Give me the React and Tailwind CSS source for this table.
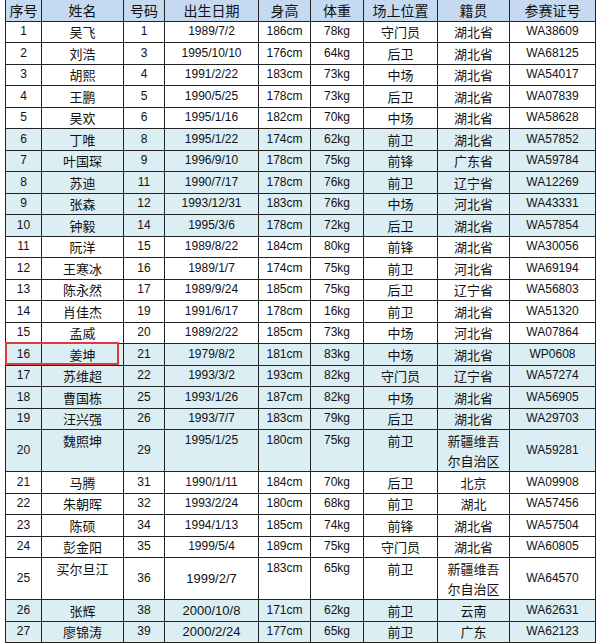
const COLS = [36, 82, 41, 94, 52, 53, 74, 72, 86]
const HEAD = ['序号', '姓名', '号码', '出生日期', '身高', '体重', '场上位置', '籍贯', '参赛证号']

const PLAYERS = [
  ['1', '吴飞', '1', '1989/7/2', '186cm', '78kg', '守门员', '湖北省', 'WA38609'],
  ['2', '刘浩', '3', '1995/10/10', '176cm', '64kg', '后卫', '湖北省', 'WA68125'],
  ['3', '胡熙', '4', '1991/2/22', '183cm', '73kg', '中场', '湖北省', 'WA54017'],
  ['4', '王鹏', '5', '1990/5/25', '178cm', '73kg', '后卫', '湖北省', 'WA07839'],
  ['5', '吴欢', '6', '1995/1/16', '182cm', '70kg', '中场', '湖北省', 'WA58628'],
  ['6', '丁唯', '8', '1995/1/22', '174cm', '62kg', '前卫', '湖北省', 'WA57852'],
  ['7', '叶国琛', '9', '1996/9/10', '178cm', '75kg', '前锋', '广东省', 'WA59784'],
  ['8', '苏迪', '11', '1990/7/17', '178cm', '76kg', '前卫', '辽宁省', 'WA12269'],
  ['9', '张森', '12', '1993/12/31', '183cm', '76kg', '中场', '河北省', 'WA43331'],
  ['10', '钟毅', '14', '1995/3/6', '178cm', '72kg', '后卫', '湖北省', 'WA57854'],
  ['11', '阮洋', '15', '1989/8/22', '184cm', '80kg', '前锋', '湖北省', 'WA30056'],
  ['12', '王寒冰', '16', '1989/1/7', '174cm', '75kg', '前卫', '河北省', 'WA69194'],
  ['13', '陈永然', '17', '1989/9/24', '185cm', '75kg', '后卫', '辽宁省', 'WA56803'],
  ['14', '肖佳杰', '19', '1991/6/17', '178cm', '16kg', '前卫', '湖北省', 'WA51320'],
  ['15', '孟威', '20', '1989/2/22', '185cm', '73kg', '中场', '河北省', 'WA07864'],
  ['16', '姜坤', '21', '1979/8/2', '181cm', '83kg', '中场', '湖北省', 'WP0608'],
  ['17', '苏维超', '22', '1993/3/2', '193cm', '82kg', '守门员', '辽宁省', 'WA57274'],
  ['18', '曹国栋', '25', '1993/1/26', '187cm', '82kg', '中场', '湖北省', 'WA56905'],
  ['19', '汪兴强', '26', '1993/7/7', '183cm', '79kg', '后卫', '湖北省', 'WA29703'],
  ['20', '魏照坤', '29', '1995/1/25', '180cm', '75kg', '前卫', '新疆维吾|尔自治区', 'WA59281'],
  ['21', '马腾', '31', '1990/1/11', '184cm', '70kg', '后卫', '北京', 'WA09908'],
  ['22', '朱朝晖', '32', '1993/2/24', '180cm', '68kg', '前卫', '湖北', 'WA57456'],
  ['23', '陈硕', '34', '1994/1/13', '185cm', '74kg', '前锋', '湖北省', 'WA57504'],
  ['24', '彭金阳', '35', '1999/5/4', '189cm', '75kg', '守门员', '湖北省', 'WA60805'],
  ['25', '买尔旦江', '36', '1999/2/7', '183cm', '65kg', '前卫', '新疆维吾|尔自治区', 'WA64570'],
  ['26', '张辉', '38', '2000/10/8', '171cm', '62kg', '前卫', '云南', 'WA62631'],
  ['27', '廖锦涛', '39', '2000/2/24', '177cm', '65kg', '前卫', '广东', 'WA62123'],
]

// columns holding Chinese text vs digits
const CJK = [false, true, false, false, false, false, true, true, false]
const NUM = 'font-["Liberation_Sans",sans-serif] text-[12px]'
const ZH = 'font-["Noto_Sans_CJK_SC",sans-serif] text-[13px]'

function Cell({ value, col, tall, bigDate, children }) {
  // in double-height rows only these stay vertically centred
  const middle = !tall || col === 0 || col === 2 || col === 8 || col === 7 || bigDate
  const font = bigDate ? 'font-["Liberation_Sans",sans-serif] text-[13px]' : CJK[col] ? ZH : NUM
  const lines = value.split('|')
  return (
    <td
      className={`relative border border-[#222] p-0 text-center text-[#111] ${lines.length > 1 ? 'leading-[20px]' : 'leading-[17px]'} ${middle ? 'align-middle' : 'align-top pt-[2px]'} ${font}`}
    >
      {lines.map((l, i) => (
        <div key={i} className="whitespace-nowrap">{l}</div>
      ))}
      {children}
    </td>
  )
}

export default function App() {
  return (
    <div className="w-[599px] h-[644px] bg-white overflow-hidden pl-[5px]">
      <table className="table-fixed border-collapse w-[590px]">
        <colgroup>
          {COLS.map((w, i) => (
            <col key={i} style={{ width: w }} />
          ))}
        </colgroup>
        <thead>
          <tr className="h-[21px] bg-[#c5d9f1]">
            {HEAD.map(h => (
              <th
                key={h}
                className='border-x border-b border-[#222] p-0 text-center font-normal leading-[19px] text-[14px] text-[#111] font-["Noto_Sans_CJK_SC",sans-serif] whitespace-nowrap'
              >
                {h}
              </th>
            ))}
          </tr>
        </thead>
        <tbody>
          {PLAYERS.map((p, r) => {
            const tall = p[7].includes('|')
            const blue = Math.floor(r / 5) % 2 === 1
            return (
              <tr key={r} className={`${tall ? 'h-[42px]' : 'h-[21.5px]'} ${blue ? 'bg-[#dbeef4]' : 'bg-white'}`}>
                {p.map((v, c) => (
                  <Cell key={c} value={v} col={c} tall={tall} bigDate={r >= 24 && c === 3}>
                    {r === 15 && c === 0 && (
                      <div className="absolute left-[-1px] top-[-2px] w-[114px] h-[23px] border-2 border-[#e03a3e] pointer-events-none" />
                    )}
                  </Cell>
                ))}
              </tr>
            )
          })}
        </tbody>
      </table>
    </div>
  )
}
